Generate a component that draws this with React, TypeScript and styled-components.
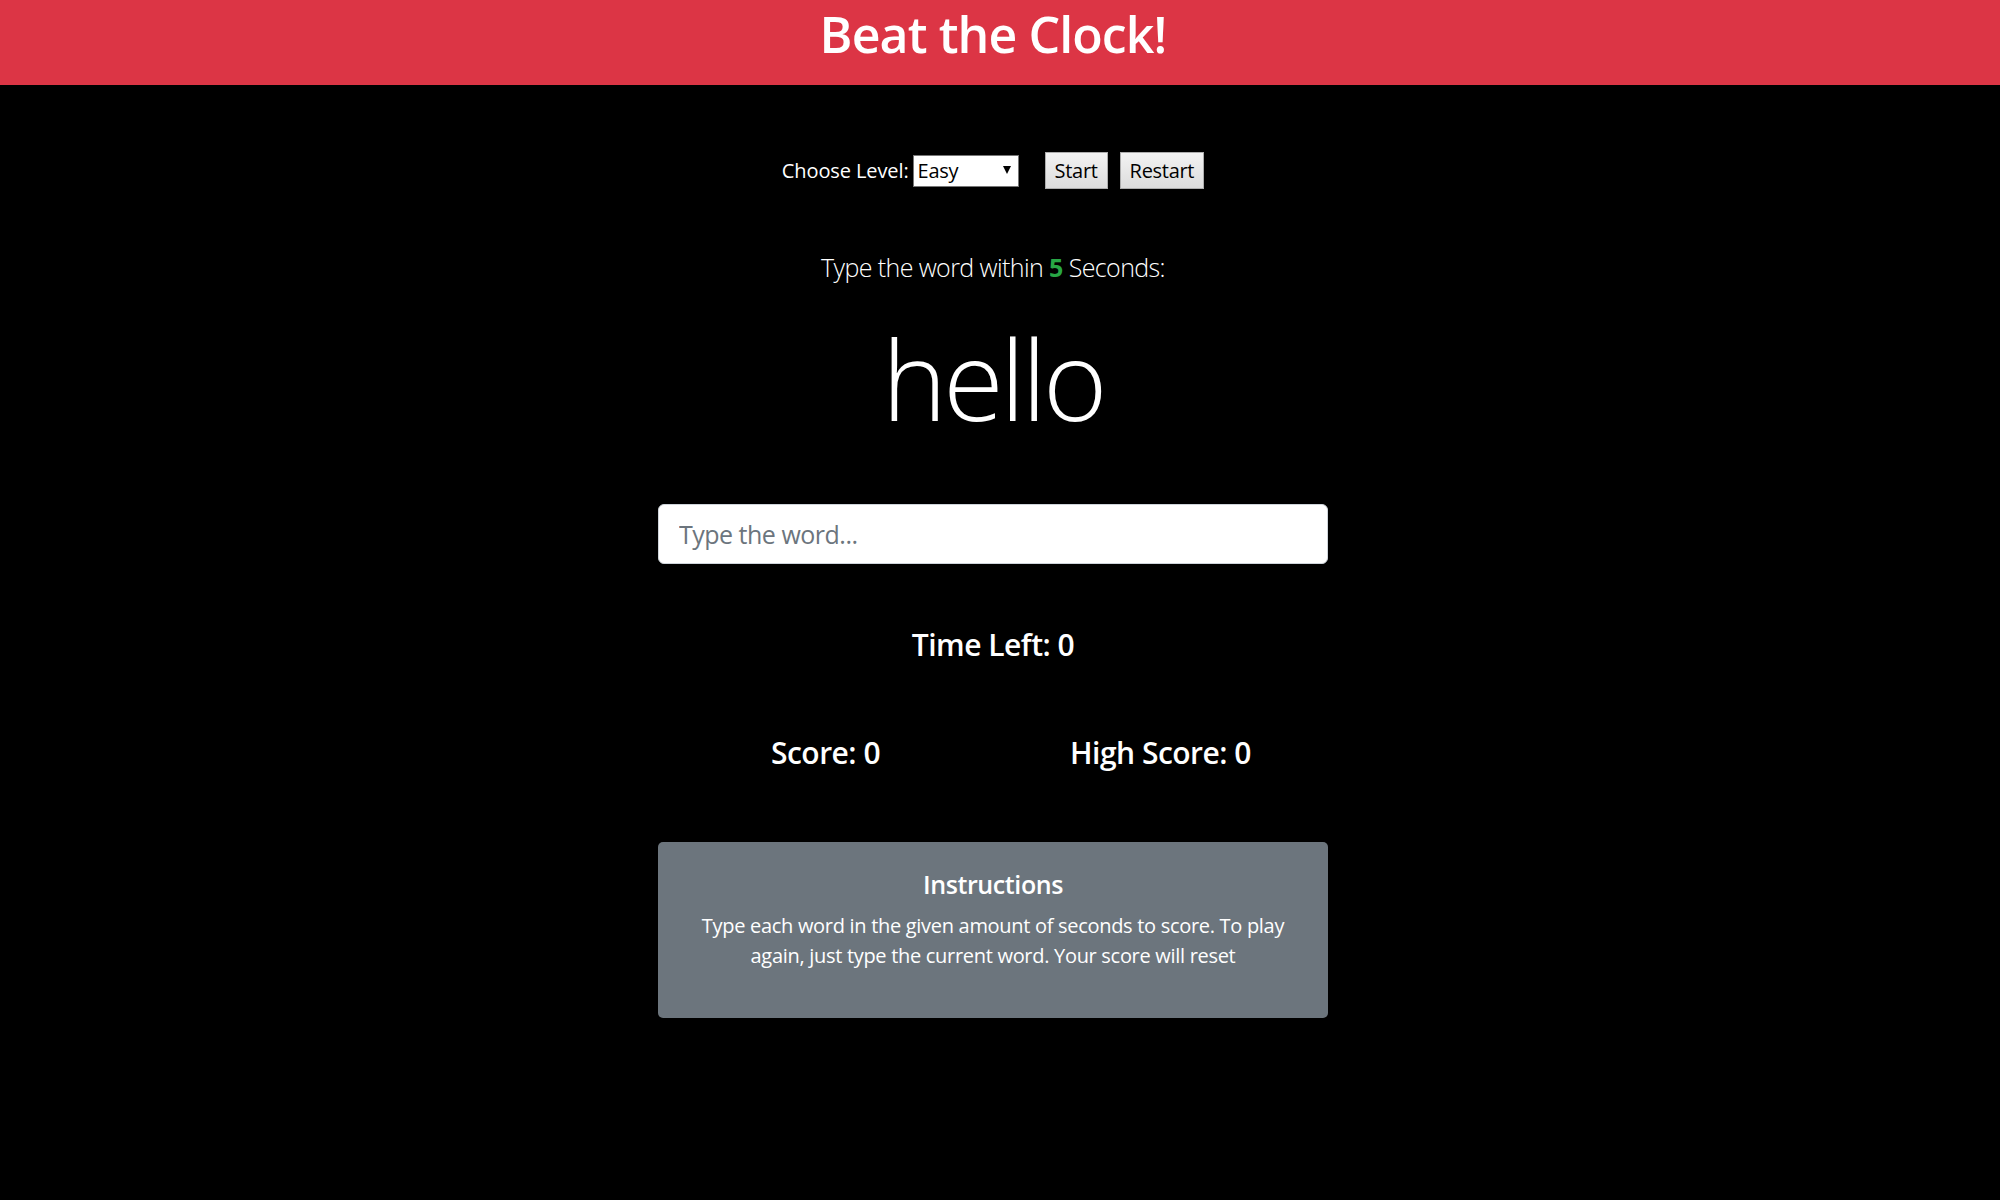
import React from "react";
import styled, { createGlobalStyle } from "styled-components";

const FONT = `"Open Sans", "Noto Sans", "Liberation Sans", sans-serif`;

const Global = createGlobalStyle`
  html, body { margin: 0; padding: 0; }
  body {
    background: #000;
    color: #fff;
    font-family: ${FONT};
    font-size: 20px;
    line-height: 1.5;
  }
  * { box-sizing: border-box; }
`;

const Header = styled.header`
  height: 85px;
  padding-right: 14px;
  background: #dc3545;
  display: flex;
  justify-content: center;
  align-items: flex-start;
`;

const Title = styled.h1`
  margin: 0;
  padding-top: 4px;
  font-size: 50px;
  font-weight: 600;
  line-height: 1.2;
  letter-spacing: -0.9px;
  color: #fff;
`;

const Page = styled.div`
  padding-right: 14px;
`;

const Main = styled.main`
  width: 670px;
  margin: 0 auto;
  display: flex;
  flex-direction: column;
  align-items: center;
  text-align: center;
`;

const Controls = styled.div`
  margin-top: 67px;
  display: flex;
  align-items: center;
  font-size: 20px;
`;

const Label = styled.label`
  margin-right: 4px;
  letter-spacing: -0.1px;
`;

const SelectWrap = styled.div`
  position: relative;
  width: 106px;
  height: 32px;
  margin-right: 26px;
  &::after {
    content: "";
    position: absolute;
    right: 8px;
    top: 11px;
    border-left: 4px solid transparent;
    border-right: 4px solid transparent;
    border-top: 8px solid #000;
    pointer-events: none;
  }
`;

const Select = styled.select`
  appearance: none;
  width: 100%;
  height: 100%;
  background: #fff;
  border: 1px solid #767676;
  border-radius: 0;
  color: #000;
  font-family: ${FONT};
  font-size: 20px;
  letter-spacing: -0.3px;
  padding: 0 4px;
  outline: none;
`;

const Button = styled.button<{ $gap?: number }>`
  height: 37px;
  padding: 0 9px;
  margin-right: ${(p) => p.$gap ?? 0}px;
  background: linear-gradient(#f3f3f3, #dcdcdc);
  border: 1px solid #adadad;
  border-radius: 0;
  color: #000;
  font-family: ${FONT};
  font-size: 20px;
  letter-spacing: -0.3px;
  line-height: 1;
  cursor: pointer;
`;

const Lead = styled.p`
  margin: 60px 0 0;
  font-size: 25px;
  font-weight: 300;
  line-height: 1.5;
  letter-spacing: -0.6px;
`;

const Seconds = styled.span`
  color: #28a745;
  font-weight: 700;
`;

const Word = styled.h2`
  margin: 25px 0 0;
  font-size: 110px;
  font-weight: 300;
  line-height: 1.2;
  letter-spacing: -3.5px;
`;

const Input = styled.input`
  margin-top: 60px;
  width: 670px;
  height: 60px;
  padding: 0 20px;
  border: 1px solid #ced4da;
  border-radius: 6px;
  background: #fff;
  color: #495057;
  font-family: ${FONT};
  font-size: 25px;
  letter-spacing: -0.5px;
  outline: none;
  &::placeholder { color: #6c757d; }
`;

const Stat = styled.h3`
  margin: 0;
  font-size: 30px;
  font-weight: 600;
  line-height: 1.2;
  letter-spacing: -0.5px;
`;

const TimeRow = styled.div`
  margin-top: 63px;
`;

const ScoreRow = styled.div`
  margin-top: 72px;
  width: 100%;
  display: grid;
  grid-template-columns: 1fr 1fr;
`;

const Card = styled.section`
  margin-top: 71px;
  width: 670px;
  background: #6c757d;
  border-radius: 5px;
  padding: 27px 31px 47px;
`;

const CardTitle = styled.h5`
  margin: 0;
  font-size: 25px;
  font-weight: 600;
  line-height: 1.2;
  letter-spacing: -0.4px;
`;

const CardText = styled.p`
  margin: 12px 0 0;
  font-size: 20px;
  line-height: 1.5;
  letter-spacing: -0.3px;
`;

export default function App() {
  return (
    <>
      <Global />
      <Header>
        <Title>Beat the Clock!</Title>
      </Header>
      <Page>
        <Main>
          <Controls>
            <Label>Choose Level:</Label>
            <SelectWrap>
              <Select defaultValue="easy">
                <option value="easy">Easy</option>
                <option value="medium">Medium</option>
                <option value="hard">Hard</option>
              </Select>
            </SelectWrap>
            <Button $gap={12}>Start</Button>
            <Button>Restart</Button>
          </Controls>
          <Lead>
            Type the word within <Seconds>5</Seconds> Seconds:
          </Lead>
          <Word>hello</Word>
          <Input placeholder="Type the word..." />
          <TimeRow>
            <Stat>Time Left: 0</Stat>
          </TimeRow>
          <ScoreRow>
            <Stat>Score: 0</Stat>
            <Stat>High Score: 0</Stat>
          </ScoreRow>
          <Card>
            <CardTitle>Instructions</CardTitle>
            <CardText>
              Type each word in the given amount of seconds to score. To play
              again, just type the current word. Your score will reset
            </CardText>
          </Card>
        </Main>
      </Page>
    </>
  );
}
